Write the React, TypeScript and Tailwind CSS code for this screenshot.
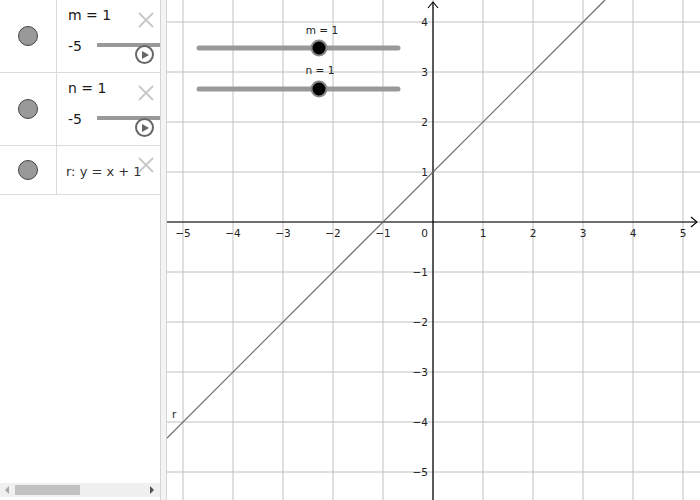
const font = { fontFamily: '"DejaVu Sans", "Liberation Sans", sans-serif' }

const gridX = [183, 233, 283, 333, 383, 433, 483, 533, 583, 633, 683]
const gridY = [22, 72, 122, 172, 222, 272, 322, 372, 422, 472]
const xLabels = [
  { x: 183, t: "−5" },
  { x: 233, t: "−4" },
  { x: 283, t: "−3" },
  { x: 333, t: "−2" },
  { x: 383, t: "−1" },
  { x: 483, t: "1" },
  { x: 533, t: "2" },
  { x: 583, t: "3" },
  { x: 633, t: "4" },
  { x: 683, t: "5" },
]
const yLabels = [
  { y: 22, t: "4" },
  { y: 72, t: "3" },
  { y: 122, t: "2" },
  { y: 172, t: "1" },
  { y: 272, t: "−1" },
  { y: 322, t: "−2" },
  { y: 372, t: "−3" },
  { y: 422, t: "−4" },
  { y: 472, t: "−5" },
]

const Dot = () => (
  <div className="w-[57px] shrink-0 border-r border-[#dcdcdc] flex items-center justify-center">
    <div className="w-[20px] h-[20px] rounded-full bg-[#999999] border border-[#444444]" />
  </div>
)

// grey close cross, drawn bigger than lucide's
const Close = ({ top }: { top: number }) => (
  <svg width="16" height="16" viewBox="0 0 16 16" className="absolute left-[81px]" style={{ top }}>
    <path d="M1 1 L15 15 M15 1 L1 15" stroke="#c8c8c8" strokeWidth="1.8" fill="none" />
  </svg>
)

const Play = () => (
  <div className="absolute left-[78px] top-[45px] w-[19px] h-[19px] rounded-full border-2 border-[#666666] bg-white flex items-center justify-center">
    <svg width="7" height="8" viewBox="0 0 7 8" className="ml-[1px]">
      <path d="M0 0 L7 4 L0 8 Z" fill="#666666" />
    </svg>
  </div>
)

const SliderRow = ({ label }: { label: string }) => (
  <div className="flex h-[73px] border-b border-[#dcdcdc]">
    <Dot />
    <div className="relative flex-1 overflow-hidden pl-[11px] pt-[7px] text-[14px] text-[#1a1a1a]">
      <div className="h-[17px] leading-[17px]">{label}</div>
      <div className="mt-[14px] flex items-center h-[17px]">
        <span className="w-[29px] shrink-0 leading-[17px]">-5</span>
        <div className="h-[4px] w-[120px] shrink-0 bg-[#999999] mt-[-3px]" />
      </div>
      <Close top={12} />
      <Play />
    </div>
  </div>
)

const Graph = () => (
  <svg width="533" height="500" viewBox="167 0 533 500" style={font} className="block">
    <rect x="167" y="0" width="533" height="500" fill="#ffffff" />
    {gridX.map((x) => (
      <line key={"gx" + x} x1={x} y1={0} x2={x} y2={500} stroke="#c0c0c0" strokeWidth="1" />
    ))}
    {gridY.map((y) => (
      <line key={"gy" + y} x1={167} y1={y} x2={700} y2={y} stroke="#c0c0c0" strokeWidth="1" />
    ))}
    {/* axes */}
    <line x1="167" y1="222" x2="697" y2="222" stroke="#000" strokeWidth="1.2" />
    <path d="M691 217 L697 222 L691 227" fill="none" stroke="#000" strokeWidth="1.1" />
    <line x1="433" y1="500" x2="433" y2="2" stroke="#000" strokeWidth="1.2" />
    <path d="M428 8 L433 2 L438 8" fill="none" stroke="#000" strokeWidth="1.1" />
    {xLabels.map((l) => (
      <text key={"xl" + l.x} x={l.x} y={237} fontSize="10.5" textAnchor="middle" fill="#222">
        {l.t}
      </text>
    ))}
    <text x={428} y={237} fontSize="10.5" textAnchor="end" fill="#222">0</text>
    {yLabels.map((l) => (
      <text key={"yl" + l.y} x={428} y={l.y + 4} fontSize="10.5" textAnchor="end" fill="#222">
        {l.t}
      </text>
    ))}
    {/* line r */}
    <line x1="167" y1="438" x2="605" y2="0" stroke="#666666" strokeWidth="1.2" />
    <text x={172} y={418} fontSize="10.5" fill="#222">r</text>
    {/* sliders */}
    <line x1="199" y1="48" x2="398" y2="48" stroke="#999999" strokeWidth="5" strokeLinecap="round" />
    <circle cx="319" cy="48" r="7.5" fill="#000" stroke="#888" strokeWidth="2" />
    <text x={322} y={34} fontSize="10.5" textAnchor="middle" fill="#222">m = 1</text>
    <line x1="199" y1="89" x2="398" y2="89" stroke="#999999" strokeWidth="5" strokeLinecap="round" />
    <circle cx="319" cy="89" r="7.5" fill="#000" stroke="#888" strokeWidth="2" />
    <text x={320} y={74} fontSize="10.5" textAnchor="middle" fill="#222">n = 1</text>
  </svg>
)

export default function App() {
  return (
    <div className="w-[700px] h-[500px] flex bg-white overflow-hidden" style={font}>
      <div className="w-[160px] shrink-0 flex flex-col">
        <SliderRow label="m = 1" />
        <SliderRow label="n = 1" />
        <div className="flex h-[49px] border-b border-[#dcdcdc]">
          <Dot />
          <div className="relative flex-1 overflow-hidden pl-[9px] flex items-center text-[13px] text-[#333]">
            <span className="mt-[4px] whitespace-nowrap">r: y = x + 1</span>
            <Close top={11} />
          </div>
        </div>
        <div className="flex-1" />
        <div className="h-[14px] bg-[#f0f0f0] flex items-center">
          <svg width="15" height="14" viewBox="0 0 15 14">
            <path d="M9 3 L5 7 L9 11 Z" fill="#a8a8a8" />
          </svg>
          <div className="h-[10px] w-[65px] bg-[#c1c1c1]" />
          <div className="flex-1" />
          <svg width="15" height="14" viewBox="0 0 15 14">
            <path d="M5 3 L9 7 L5 11 Z" fill="#505050" />
          </svg>
        </div>
        <div className="h-[3px]" />
      </div>
      <div className="w-[7px] shrink-0 bg-[#f4f4f4] border-x border-[#d4d4d4]" />
      <Graph />
    </div>
  )
}
